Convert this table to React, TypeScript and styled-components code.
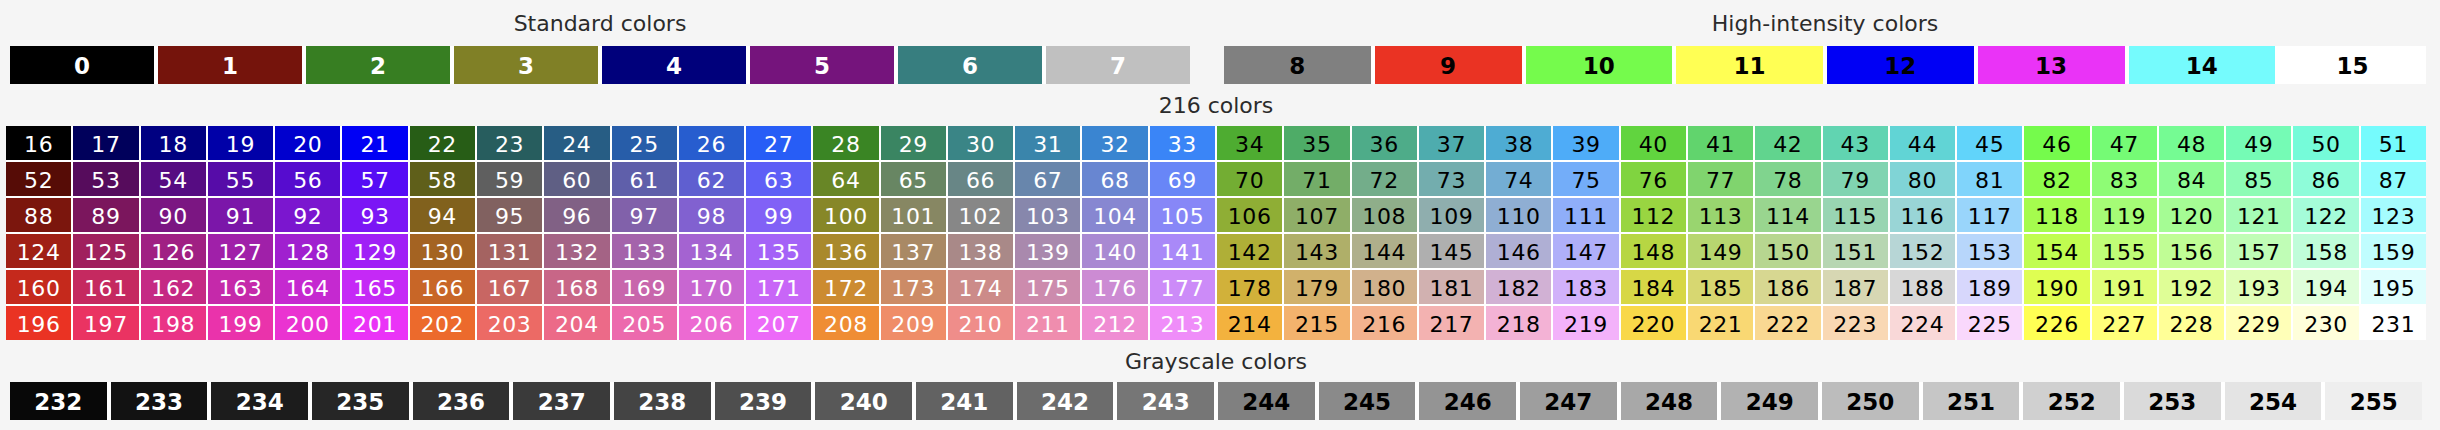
import React from 'react';
import styled, { createGlobalStyle } from 'styled-components';

const GlobalStyle = createGlobalStyle`
  body {
    margin: 0;
    background: #f5f5f5;
  }
`;

// the reference was shot on a wide-gamut screen, so sRGB values show up shifted
const toDisplay = (r: number, g: number, b: number) => {
  const lin = (c: number) => {
    c /= 255;
    return c <= 0.04045 ? c / 12.92 : Math.pow((c + 0.055) / 1.055, 2.4);
  };
  const enc = (c: number) => {
    c = Math.min(1, Math.max(0, c));
    const v = c <= 0.0031308 ? 12.92 * c : 1.055 * Math.pow(c, 1 / 2.4) - 0.055;
    return Math.round(v * 255);
  };
  const R = lin(r);
  const G = lin(g);
  const B = lin(b);
  const pr = 0.8225 * R + 0.1774 * G;
  const pg = 0.0332 * R + 0.9669 * G;
  const pb = 0.0171 * R + 0.0724 * G + 0.9108 * B;
  return `rgb(${enc(pr)}, ${enc(pg)}, ${enc(pb)})`;
};

const STANDARD: [number, number, number][] = [
  [0, 0, 0], [128, 0, 0], [0, 128, 0], [128, 128, 0],
  [0, 0, 128], [128, 0, 128], [0, 128, 128], [192, 192, 192],
  [128, 128, 128], [255, 0, 0], [0, 255, 0], [255, 255, 0],
  [0, 0, 255], [255, 0, 255], [0, 255, 255], [255, 255, 255],
];

const LEVELS = [0, 95, 135, 175, 215, 255];

const Page = styled.div`
  width: 2420px;
  padding: 0 0 0 6px;
  font-family: "DejaVu Sans", "Noto Sans", sans-serif;
`;

const HalfRow = styled.div`
  display: grid;
  grid-template-columns: 1188px 1210px;
  column-gap: 26px;
`;

const Label = styled.div<{ $h: number }>`
  height: ${(p) => p.$h}px;
  line-height: ${(p) => p.$h + 2}px;
  text-align: center;
  font-size: 22px;
  color: #2b2b2b;
`;

const SwatchRow = styled.div<{ $cols: number; $gap: number; $inset: number }>`
  display: grid;
  grid-template-columns: repeat(${(p) => p.$cols}, 1fr);
  gap: ${(p) => p.$gap}px;
  margin: 0 ${(p) => p.$inset}px;
  background: #ffffff;
`;

const BigCell = styled.div<{ $bg: string; $fg: string }>`
  height: 38px;
  display: flex;
  align-items: center;
  justify-content: center;
  padding-top: 2px;
  box-sizing: border-box;
  background: ${(p) => p.$bg};
  color: ${(p) => p.$fg};
  font-size: 23px;
  font-weight: 700;
`;

const GridCell = styled.div<{ $bg: string; $fg: string }>`
  height: 34px;
  display: flex;
  align-items: center;
  justify-content: center;
  padding-top: 2px;
  box-sizing: border-box;
  background: ${(p) => p.$bg};
  color: ${(p) => p.$fg};
  font-size: 22px;
  letter-spacing: 0.6px;
`;

const StandardHalf: React.FC<{ title: string; start: number }> = ({ title, start }) => (
  <section>
    <Label $h={46}>{title}</Label>
    <SwatchRow $cols={8} $gap={4} $inset={4}>
      {STANDARD.slice(start, start + 8).map(([r, g, b], i) => (
        <BigCell key={i} $bg={toDisplay(r, g, b)} $fg={start === 0 ? '#fff' : '#000'}>
          {start + i}
        </BigCell>
      ))}
    </SwatchRow>
  </section>
);

const App: React.FC = () => {
  const cube: { n: number; bg: string; fg: string }[] = [];
  for (let row = 0; row < 6; row++) {
    for (let col = 0; col < 36; col++) {
      const r = row;
      const g = Math.floor(col / 6);
      const b = col % 6;
      cube.push({
        n: 16 + r * 36 + g * 6 + b,
        bg: toDisplay(LEVELS[r], LEVELS[g], LEVELS[b]),
        fg: g < 3 ? '#fff' : '#000',
      });
    }
  }

  const grays = Array.from({ length: 24 }, (_, i) => {
    const v = 8 + i * 10;
    return { n: 232 + i, bg: toDisplay(v, v, v), fg: i < 12 ? '#fff' : '#000' };
  });

  return (
    <>
      <GlobalStyle />
      <Page>
        <HalfRow>
          <StandardHalf title="Standard colors" start={0} />
          <StandardHalf title="High-intensity colors" start={8} />
        </HalfRow>

        <Label $h={42}>216 colors</Label>
        <SwatchRow $cols={36} $gap={2} $inset={0}>
          {cube.map((c) => (
            <GridCell key={c.n} $bg={c.bg} $fg={c.fg}>
              {c.n}
            </GridCell>
          ))}
        </SwatchRow>

        <Label $h={42}>Grayscale colors</Label>
        <SwatchRow $cols={24} $gap={4} $inset={4}>
          {grays.map((c) => (
            <BigCell key={c.n} $bg={c.bg} $fg={c.fg}>
              {c.n}
            </BigCell>
          ))}
        </SwatchRow>
      </Page>
    </>
  );
};

export default App;
